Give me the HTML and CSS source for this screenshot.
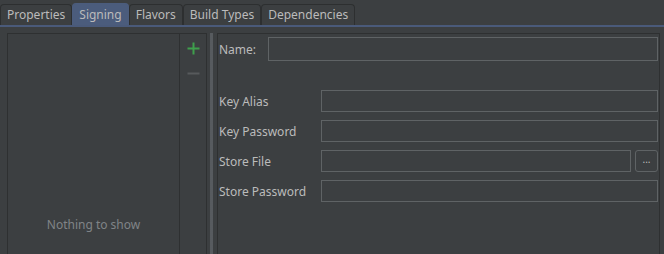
FILE: index.html
```html
<!DOCTYPE html>
<html>
  <head>
    <link rel="stylesheet" href="styles.css">
  </head>
  <body>
    <div class="tabs">
      <div class="tab">Properties</div>
      <div class="tab selected">Signing</div>
      <div class="tab">Flavors</div>
      <div class="tab">Build Types</div>
      <div class="tab">Dependencies</div>
    </div>

    <div class="content">
      <div class="list-panel">
        <div class="list">
          <div class="empty">Nothing to show</div>
        </div>
        <div class="toolbar">
          <svg class="tool" width="13" height="13" viewBox="0 0 13 13">
            <path d="M6.5 0.5v12M0.5 6.5h12" stroke="#3e9f4c" stroke-width="2" fill="none" />
          </svg>
          <svg class="tool" width="13" height="13" viewBox="0 0 13 13">
            <path d="M0.5 6.5h12" stroke="#575a5c" stroke-width="2" fill="none" />
          </svg>
        </div>
      </div>

      <div class="splitter"></div>

      <div class="form-panel">
        <div class="row name-row">
          <label>Name:</label>
          <div class="field"></div>
        </div>

        <div class="fields">
          <div class="row">
            <label>Key Alias</label>
            <div class="field"></div>
          </div>
          <div class="row">
            <label>Key Password</label>
            <div class="field"></div>
          </div>
          <div class="row">
            <label>Store File</label>
            <div class="field"></div>
            <div class="browse">...</div>
          </div>
          <div class="row">
            <label>Store Password</label>
            <div class="field"></div>
          </div>
        </div>
      </div>
    </div>
  </body>
</html>
```

FILE: styles.css
```css
html,
body {
  height: 100%;
}

body {
  margin: 0;
  background-color: #3c3f41;
  color: #bbbbbb;
  font-family: "Noto Sans", "Open Sans", sans-serif;
  font-size: 12px;
  display: flex;
  flex-direction: column;
  overflow: hidden;
}

.tabs {
  display: flex;
  padding: 4px 0 0 0;
  border-bottom: 2px solid #4a5a7a;
  height: 21px;
}

.tab {
  padding: 0 6px;
  line-height: 20px;
  border: 1px solid #2d2f30;
  border-bottom: none;
  border-radius: 4px 4px 0 0;
  margin-right: 0;
}

.tab.selected {
  background-color: #4b5c7c;
  border-color: #4b5c7c;
  margin-top: -1px;
  line-height: 21px;
}

.content {
  flex: 1;
  display: flex;
  padding: 6px 4px 0 7px;
  min-height: 0;
}

.list-panel {
  width: 198px;
  display: flex;
  border: 1px solid #2e3031;
  border-bottom: none;
}

.list {
  flex: 1;
  display: flex;
  align-items: flex-end;
  justify-content: center;
}

.empty {
  color: #808487;
  font-size: 12px;
  margin-bottom: 21px;
}

.toolbar {
  width: 26px;
  border-left: 1px solid #2e3031;
  display: flex;
  flex-direction: column;
  align-items: center;
  padding-top: 8px;
  gap: 12px;
}

.tool {
  display: block;
}

.splitter {
  width: 3px;
  margin: 0 4px 0 3px;
  background-image: radial-gradient(circle, #585c5f 0.7px, transparent 1px);
  background-size: 2px 2px;
}

.form-panel {
  flex: 1;
  border: 1px solid #2e3031;
  border-bottom: none;
  padding: 3px 1px 0 1px;
}

.row {
  display: flex;
  align-items: center;
}

.row label {
  width: 102px;
  flex-shrink: 0;
}

.name-row label {
  width: 49px;
}

.name-row {
  height: 24px;
  margin-bottom: 29px;
}

.name-row .field {
  height: 22px;
}

.fields .row {
  height: 22px;
  margin-bottom: 8px;
}

.field {
  flex: 1;
  height: 20px;
  border: 1px solid #5f6365;
}

.browse {
  width: 21px;
  height: 20px;
  margin-left: 4px;
  border: 1px solid #5f6365;
  border-radius: 3px;
  font-size: 10px;
  text-align: center;
  line-height: 16px;
  color: #bbbbbb;
}
```
